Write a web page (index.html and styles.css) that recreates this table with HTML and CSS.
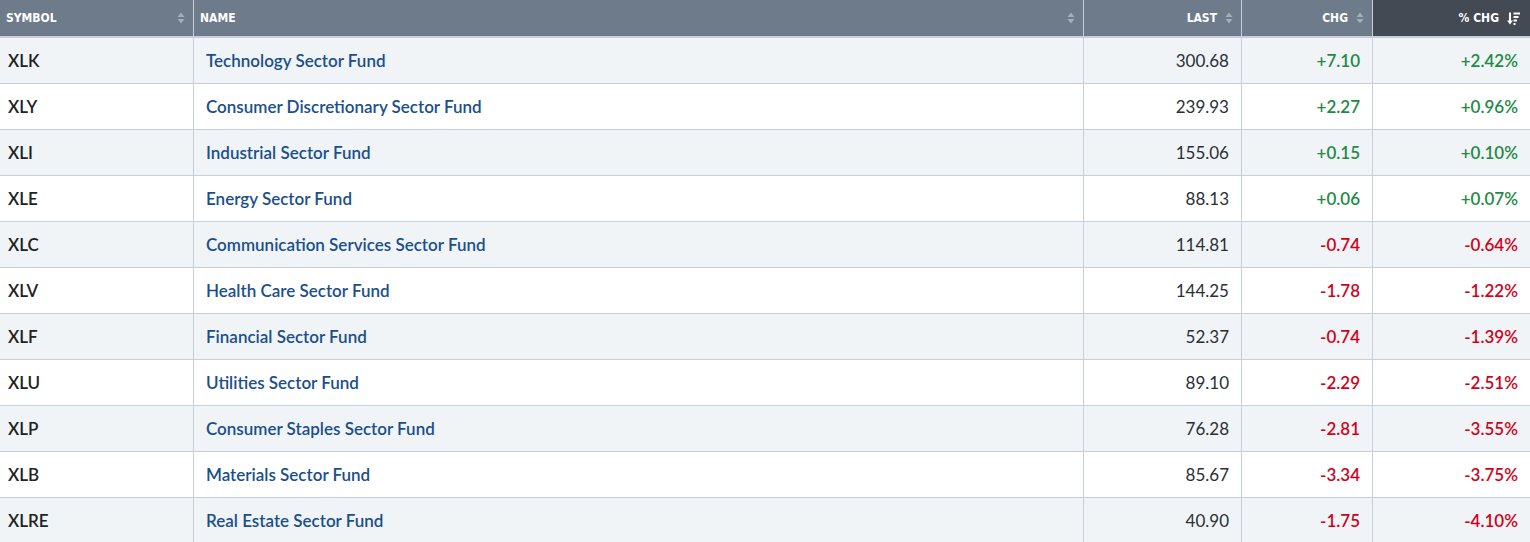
FILE: index.html
```html
<!DOCTYPE html>
<html>
<head>
<meta charset="utf-8">
<link rel="stylesheet" href="styles.css">
</head>
<body>
<table class="grid">
  <colgroup>
    <col class="c-sym"><col class="c-name"><col class="c-last"><col class="c-chg"><col class="c-pct">
  </colgroup>
  <thead>
    <tr>
      <th class="left"><span class="hd">SYMBOL<svg class="sort" viewBox="0 0 8 12"><path d="M4 0.5L7.5 5H0.5Z"/><path d="M4 11.5L7.5 7H0.5Z"/></svg></span></th>
      <th class="left"><span class="hd">NAME<svg class="sort" viewBox="0 0 8 12"><path d="M4 0.5L7.5 5H0.5Z"/><path d="M4 11.5L7.5 7H0.5Z"/></svg></span></th>
      <th class="right"><span class="hd">LAST<svg class="sort" viewBox="0 0 8 12"><path d="M4 0.5L7.5 5H0.5Z"/><path d="M4 11.5L7.5 7H0.5Z"/></svg></span></th>
      <th class="right"><span class="hd">CHG<svg class="sort" viewBox="0 0 8 12"><path d="M4 0.5L7.5 5H0.5Z"/><path d="M4 11.5L7.5 7H0.5Z"/></svg></span></th>
      <th class="right active"><span class="hd">% CHG<svg class="sorted" viewBox="0 0 13 13"><path d="M3 0.5V10" stroke="#fff" stroke-width="2" fill="none"/><path d="M0 8.5L3 12.5L6 8.5Z" fill="#fff"/><rect x="6.5" y="0.5" width="6.5" height="2" fill="#fff"/><rect x="6.5" y="4" width="5" height="2" fill="#fff"/><rect x="6.5" y="7.5" width="3.5" height="2" fill="#fff"/><rect x="6.5" y="11" width="2" height="2" fill="#fff"/></svg></span></th>
    </tr>
  </thead>
  <tbody>
    <tr><td class="sym">XLK</td><td class="name">Technology Sector Fund</td><td class="num">300.68</td><td class="num up">+7.10</td><td class="num up">+2.42%</td></tr>
    <tr><td class="sym">XLY</td><td class="name">Consumer Discretionary Sector Fund</td><td class="num">239.93</td><td class="num up">+2.27</td><td class="num up">+0.96%</td></tr>
    <tr><td class="sym">XLI</td><td class="name">Industrial Sector Fund</td><td class="num">155.06</td><td class="num up">+0.15</td><td class="num up">+0.10%</td></tr>
    <tr><td class="sym">XLE</td><td class="name">Energy Sector Fund</td><td class="num">88.13</td><td class="num up">+0.06</td><td class="num up">+0.07%</td></tr>
    <tr><td class="sym">XLC</td><td class="name">Communication Services Sector Fund</td><td class="num">114.81</td><td class="num down">-0.74</td><td class="num down">-0.64%</td></tr>
    <tr><td class="sym">XLV</td><td class="name">Health Care Sector Fund</td><td class="num">144.25</td><td class="num down">-1.78</td><td class="num down">-1.22%</td></tr>
    <tr><td class="sym">XLF</td><td class="name">Financial Sector Fund</td><td class="num">52.37</td><td class="num down">-0.74</td><td class="num down">-1.39%</td></tr>
    <tr><td class="sym">XLU</td><td class="name">Utilities Sector Fund</td><td class="num">89.10</td><td class="num down">-2.29</td><td class="num down">-2.51%</td></tr>
    <tr><td class="sym">XLP</td><td class="name">Consumer Staples Sector Fund</td><td class="num">76.28</td><td class="num down">-2.81</td><td class="num down">-3.55%</td></tr>
    <tr><td class="sym">XLB</td><td class="name">Materials Sector Fund</td><td class="num">85.67</td><td class="num down">-3.34</td><td class="num down">-3.75%</td></tr>
    <tr><td class="sym">XLRE</td><td class="name">Real Estate Sector Fund</td><td class="num">40.90</td><td class="num down">-1.75</td><td class="num down">-4.10%</td></tr>
  </tbody>
</table>
</body>
</html>
```
FILE: styles.css
```css
html, body {
  margin: 0;
  padding: 0;
  background: #fff;
}
.grid {
  width: 1530px;
  border-collapse: separate;
  border-spacing: 0;
  table-layout: fixed;
  font-family: Lato, "Liberation Sans", sans-serif;
}
.c-sym { width: 193px; }
.c-name { width: 890px; }
.c-last { width: 158px; }
.c-chg { width: 131px; }
.c-pct { width: 158px; }

thead th {
  height: 38px;
  padding: 0 8px 0 6px;
  background: #6d7b8b;
  color: #fff;
  font-family: "DejaVu Sans Condensed", "DejaVu Sans", sans-serif;
  font-weight: bold;
  font-size: 12px;
  letter-spacing: 0;
  border-left: 1px solid #c6d0da;
  border-bottom: 2px solid #c6d0da;
  box-sizing: border-box;
}
thead th:first-child { border-left: none; }
thead th.left { text-align: left; }
thead th.right { text-align: right; }
thead th.active { background: #434a54; }
.hd {
  display: flex;
  align-items: center;
  gap: 8px;
}
th.left .hd { justify-content: space-between; }
th.right .hd { justify-content: flex-end; }
.sort {
  width: 8px;
  height: 12px;
  fill: #a3aeba;
  flex: none;
}
.sorted {
  width: 13px;
  height: 13px;
  flex: none;
  margin-right: 2px;
}

tbody td {
  height: 46px;
  box-sizing: border-box;
  border-left: 1px solid #c6d0da;
  border-bottom: 1px solid #c6d0da;
  font-size: 17px;
  padding: 0 12px 0 12px;
  color: #2a2f36;
  white-space: nowrap;
}
tbody td:first-child { border-left: none; }
tbody tr:nth-child(odd) td { background: #f0f4f7; }
tbody tr:nth-child(even) td { background: #fff; }
td.sym {
  padding-left: 8px;
  font-weight: 600;
  color: #222;
}
td.name {
  color: #1a4f8b;
  font-weight: 600;
}
td.num { text-align: right; }
td.up { color: #1f8a47; font-weight: 600; }
td.down { color: #d0021b; font-weight: 600; }
```
